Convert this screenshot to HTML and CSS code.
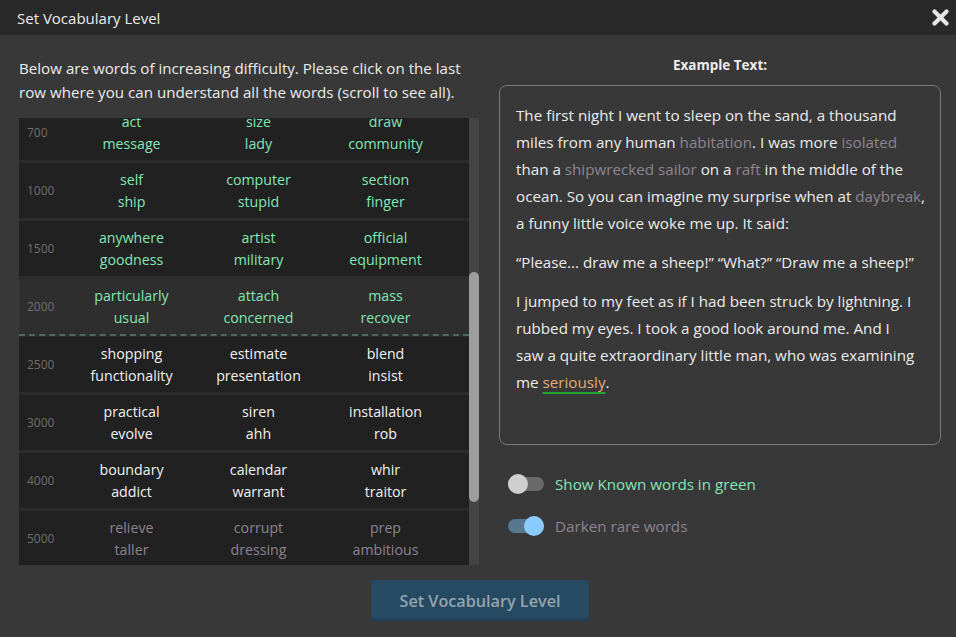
FILE: index.html
```html
<!DOCTYPE html>
<html lang="en">
<head>
<meta charset="utf-8">
<title>Set Vocabulary Level</title>
<link rel="stylesheet" href="styles.css">
</head>
<body>
<div class="dialog">
  <header class="titlebar">
    <span class="title">Set Vocabulary Level</span>
    <button class="close" aria-label="Close">
      <svg width="17" height="17" viewBox="0 0 17 17"><path d="M2.5 2.5 L14.5 14.5 M14.5 2.5 L2.5 14.5" stroke="#e6e6e6" stroke-width="4.2" stroke-linecap="round"/></svg>
    </button>
  </header>
  <main class="content">
    <section class="left">
      <p class="intro">Below are words of increasing difficulty. Please click on the last<br>row where you can understand all the words (scroll to see all).</p>
      <div class="list">
        <div class="viewport">
          <div class="rows">
            <div class="row known"><span class="lvl">700</span><span class="w">act<br>message</span><span class="w">size<br>lady</span><span class="w">draw<br>community</span></div>
            <div class="row known"><span class="lvl">1000</span><span class="w">self<br>ship</span><span class="w">computer<br>stupid</span><span class="w">section<br>finger</span></div>
            <div class="row known"><span class="lvl">1500</span><span class="w">anywhere<br>goodness</span><span class="w">artist<br>military</span><span class="w">official<br>equipment</span></div>
            <div class="row known selected"><span class="lvl">2000</span><span class="w">particularly<br>usual</span><span class="w">attach<br>concerned</span><span class="w">mass<br>recover</span></div>
            <div class="row"><span class="lvl">2500</span><span class="w">shopping<br>functionality</span><span class="w">estimate<br>presentation</span><span class="w">blend<br>insist</span></div>
            <div class="row"><span class="lvl">3000</span><span class="w">practical<br>evolve</span><span class="w">siren<br>ahh</span><span class="w">installation<br>rob</span></div>
            <div class="row"><span class="lvl">4000</span><span class="w">boundary<br>addict</span><span class="w">calendar<br>warrant</span><span class="w">whir<br>traitor</span></div>
            <div class="row rare"><span class="lvl">5000</span><span class="w">relieve<br>taller</span><span class="w">corrupt<br>dressing</span><span class="w">prep<br>ambitious</span></div>
          </div>
        </div>
        <div class="scrollbar"><div class="thumb"></div></div>
      </div>
    </section>
    <section class="right">
      <h2 class="heading">Example Text:</h2>
      <div class="sample">
        <p>The first night I went to sleep on the sand, a thousand<br>miles from any human <span class="r">habitation</span>. I was more <span class="r">isolated</span><br>than a <span class="r">shipwrecked sailor</span> on a <span class="r">raft</span> in the middle of the<br>ocean. So you can imagine my surprise when at <span class="r">daybreak</span>,<br>a funny little voice woke me up. It said:</p>
        <p>“Please... draw me a sheep!” “What?” “Draw me a sheep!”</p>
        <p>I jumped to my feet as if I had been struck by lightning. I<br>rubbed my eyes. I took a good look around me. And I<br>saw a quite extraordinary little man, who was examining<br>me <span class="hl">seriously</span>.</p>
      </div>
      <div class="toggles">
        <label class="toggle">
          <span class="switch off"><span class="knob"></span></span>
          <span class="lbl green">Show Known words in green</span>
        </label>
        <label class="toggle">
          <span class="switch on"><span class="knob"></span></span>
          <span class="lbl muted">Darken rare words</span>
        </label>
      </div>
    </section>
  </main>
  <footer class="footer">
    <button class="primary">Set Vocabulary Level</button>
  </footer>
</div>
</body>
</html>
```

FILE: styles.css
```css
* { box-sizing: border-box; }
html, body { margin: 0; padding: 0; }
body {
  width: 956px;
  height: 637px;
  overflow: hidden;
  background: #383838;
  font-family: "Open Sans", "Noto Sans", sans-serif;
  color: #ececec;
}
.dialog { display: flex; flex-direction: column; height: 637px; }

.titlebar {
  height: 35px;
  background: #292929;
  display: flex;
  align-items: center;
  justify-content: space-between;
  padding: 0 4px 0 17px;
}
.title { font-size: 15px; color: #ececec; }
.close {
  background: none; border: 0; padding: 0; width: 24px; height: 24px;
  display: flex; align-items: center; justify-content: center; margin-top: -1px;
}

.content {
  display: flex;
  gap: 20px;
  padding: 21px 15px 0 19px;
}
.left { width: 460px; }
.intro {
  margin: 0 0 14px;
  font-size: 15.15px;
  line-height: 24px;
  color: #ececec;
  white-space: nowrap;
}
.list { display: flex; height: 447px; }
.viewport { width: 450px; overflow: hidden; background: #2c2c2c; }
.rows { display: flex; flex-direction: column; gap: 3px; margin-top: -13px; }
.row {
  height: 55px;
  background: #212121;
  display: grid;
  grid-template-columns: 49px repeat(3, 127px);
  align-items: center;
  font-size: 14.2px;
  line-height: 22px;
  color: #f2f2f2;
}
.row.selected { background: #2e2e2e; border-bottom: 2px dashed #4e6a5f; height: 57px; margin-bottom: -2px; }
.row.known .w { color: #84e6b5; }
.row.rare .w { color: #8d8390; }
.lvl { font-size: 12px; color: #6e6e6e; padding-left: 8px; }
.w { text-align: center; }
.scrollbar { width: 10px; background: #444; }
.thumb { margin-top: 154px; height: 230px; background: #9d9d9d; border-radius: 5px; }

.right { width: 442px; }
.heading {
  margin: -1px 0 10px;
  text-align: center;
  font-size: 13.5px;
  font-weight: 700;
  line-height: 20px;
  color: #ececec;
}
.sample {
  height: 360px;
  border: 1px solid #7a7a7a;
  border-radius: 8px;
  padding: 16px 8px 0 16px;
  font-size: 15.2px;
  line-height: 27px;
  color: #ececec;
  white-space: nowrap;
}
.sample p { margin: 0 0 12px; }
.r { color: #8f8491; }
.hl { color: #e5a878; text-decoration: underline; text-decoration-color: #1fa62c; text-decoration-thickness: 2px; text-underline-offset: 4px; }

.toggles { display: flex; flex-direction: column; gap: 22px; margin-top: 29px; padding-left: 9px; }
.toggle { display: flex; align-items: center; gap: 11px; height: 20px; }
.switch { position: relative; width: 36px; height: 14px; border-radius: 7px; display: block; }
.switch.off { background: #6a6a6a; }
.switch.on { background: #587890; }
.knob { position: absolute; top: -3px; width: 20px; height: 20px; border-radius: 50%; }
.switch.off .knob { left: 0; background: #cfcfcf; }
.switch.on .knob { right: 0; background: #8ccbff; }
.lbl { font-size: 15.2px; }
.lbl.green { color: #84e6b5; }
.lbl.muted { color: #8d8390; }

.footer { display: flex; justify-content: center; padding: 15px 0 0 4px; }
.primary {
  width: 218px;
  height: 41px;
  border: 0;
  border-radius: 3px;
  background: #254a62;
  box-shadow: inset 0 -3px 0 #21425a;
  color: #95a4ae;
  font-family: "Open Sans", "Noto Sans", sans-serif;
  font-size: 16.2px;
  font-weight: 600;
}
```
